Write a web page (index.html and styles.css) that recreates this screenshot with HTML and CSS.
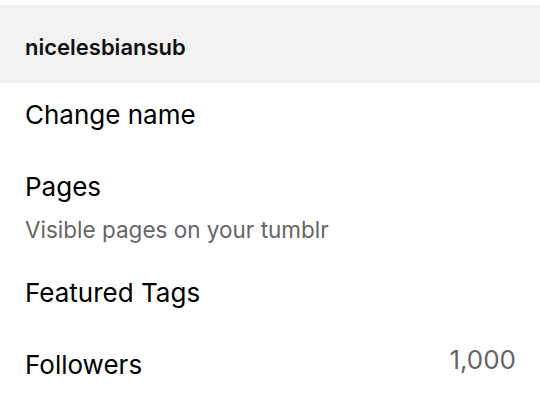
FILE: index.html
```html
<!doctype html>
<html lang="en">
  <head>
    <meta charset="UTF-8" />
    <meta name="viewport" content="width=device-width, initial-scale=1.0" />
    <title>Blog settings</title>
    <link rel="stylesheet" href="styles.css">
  </head>
  <body>
    <!-- Blog header -->
    <div class="blog-header">nicelesbiansub</div>

    <!-- Settings list -->
    <div class="settings">
      <div class="row">
        <div class="label">Change name</div>
      </div>
      <div class="row has-sub">
        <div class="label">Pages</div>
        <div class="sub">Visible pages on your tumblr</div>
      </div>
      <div class="row">
        <div class="label">Featured Tags</div>
      </div>
      <div class="row split">
        <div class="label">Followers</div>
        <div class="value">1,000</div>
      </div>
    </div>
  </body>
</html>
```

FILE: styles.css
```css
body {
  font-family: Inter, "Noto Sans", sans-serif;
  background-color: #fff;
  color: #000;
  margin: 0;
  padding-top: 5px;
}
.blog-header {
  height: 78px;
  box-sizing: border-box;
  display: flex;
  align-items: center;
  padding: 5px 25px 0;
  background-color: #f2f2f2;
  font-size: 22px;
  font-weight: 600;
  color: #111;
}
.row {
  padding: 16px 25px 24px;
}
.row.has-sub {
  padding-bottom: 17px;
}
.row.split {
  display: flex;
  justify-content: space-between;
  align-items: center;
  padding-right: 24px;
}
.label {
  font-size: 26px;
  line-height: 32px;
}
.sub {
  margin-top: 13px;
  font-size: 22.5px;
  line-height: 28px;
  color: #666;
}
.value {
  font-size: 26px;
  line-height: 32px;
  color: #666;
  margin-top: -10px;
}
```
